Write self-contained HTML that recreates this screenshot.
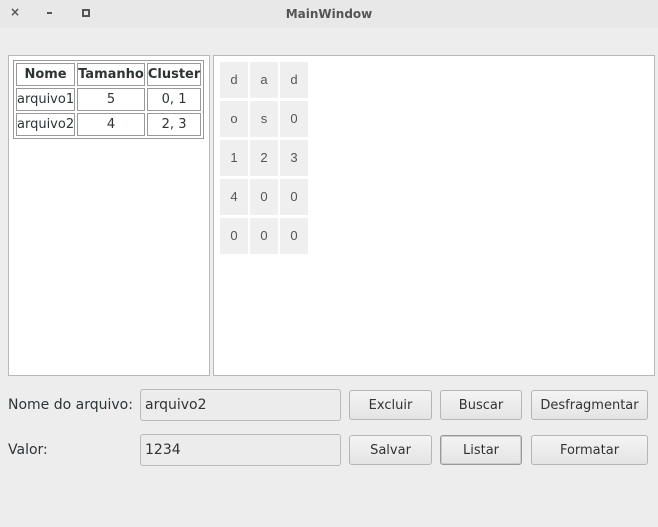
<html><head><style>
body{margin:0;width:658px;height:527px;background:#ededed;font-family:"DejaVu Sans","Liberation Sans",sans-serif;font-size:13px;color:#2e3436;position:relative;overflow:hidden}
.a{position:absolute}
.title{top:0;left:0;width:658px;height:28px;background:#e8e8e8;text-align:center;line-height:28px;font-weight:bold;font-size:12px;color:#555}
.panel{background:#fff;border:1px solid #b8b8b8}
td{border:1px solid #999;padding:0;text-align:center;font-size:13px}
.cell{background:#efefef;width:28px;height:36px;line-height:36px;text-align:center;color:#555;font-family:"Liberation Sans",sans-serif;font-size:13px}
.inp{background:#ececec;border:1px solid #bbb;border-radius:3px;box-sizing:border-box;padding-left:4px;line-height:30px;font-size:14px;color:#333}
.btn{background:linear-gradient(#f4f4f4,#e4e4e4);border:1px solid #b5b5b5;border-radius:3px;box-sizing:border-box;text-align:center;line-height:30px;font-size:13px;color:#333}
.lbl{font-size:14px}
</style></head><body>
<div class="a title">MainWindow</div>
<div class="a" style="left:10px;top:5px;font-size:12px;font-weight:bold;color:#555">×</div>
<div class="a" style="left:47px;top:12px;width:5px;height:2px;background:#555"></div>
<div class="a" style="left:82px;top:9px;width:4px;height:4px;border:2px solid #555"></div>
<div class="a panel" style="left:8px;top:55px;width:200px;height:319px"></div>
<div class="a panel" style="left:213px;top:55px;width:440px;height:319px"></div>
<table class="a" style="left:13px;top:60px;border:1px solid #999;border-spacing:2px;width:186px">
<tr style="height:23px"><td style="width:60px;font-weight:bold">Nome</td><td style="width:62px;font-weight:bold">Tamanho</td><td style="font-weight:bold">Cluster</td></tr>
<tr style="height:23px"><td>arquivo1</td><td>5</td><td>0, 1</td></tr>
<tr style="height:23px"><td>arquivo2</td><td>4</td><td>2, 3</td></tr>
</table>
<div class="a" style="left:220px;top:62px;display:grid;grid-template-columns:28px 28px 28px;gap:3px 2px">
<div class="cell">d</div><div class="cell">a</div><div class="cell">d</div>
<div class="cell">o</div><div class="cell">s</div><div class="cell">0</div>
<div class="cell">1</div><div class="cell">2</div><div class="cell">3</div>
<div class="cell">4</div><div class="cell">0</div><div class="cell">0</div>
<div class="cell">0</div><div class="cell">0</div><div class="cell">0</div>
</div>
<div class="a lbl" style="left:8px;top:397px">Nome do arquivo:</div>
<div class="a lbl" style="left:8px;top:442px">Valor:</div>
<div class="a inp" style="left:140px;top:389px;width:201px;height:32px">arquivo2</div>
<div class="a inp" style="left:140px;top:434px;width:201px;height:32px">1234</div>
<div class="a btn" style="left:349px;top:390px;width:83px;height:30px">Excluir</div>
<div class="a btn" style="left:440px;top:390px;width:82px;height:30px">Buscar</div>
<div class="a btn" style="left:531px;top:390px;width:117px;height:30px">Desfragmentar</div>
<div class="a btn" style="left:349px;top:435px;width:83px;height:30px">Salvar</div>
<div class="a btn" style="left:440px;top:435px;width:82px;height:30px;border-color:#999;box-shadow:inset 0 0 0 1px #ccc">Listar</div>
<div class="a btn" style="left:531px;top:435px;width:117px;height:30px">Formatar</div>
</body></html>
